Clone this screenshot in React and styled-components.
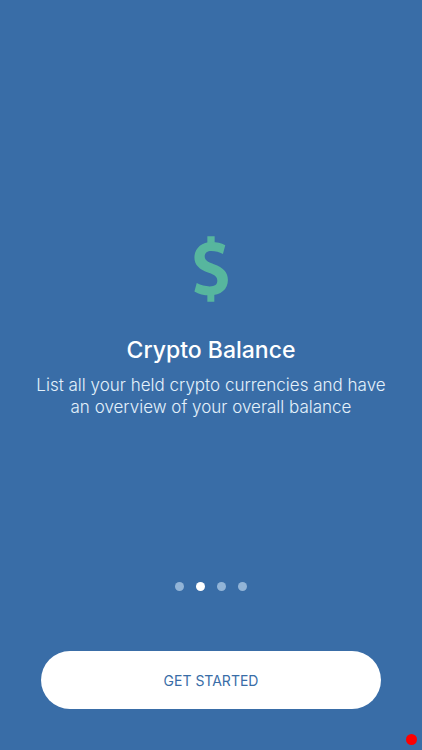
import React, { useState } from "react";
import styled, { createGlobalStyle } from "styled-components";

const GlobalStyle = createGlobalStyle`
  * {
    box-sizing: border-box;
  }
  body {
    margin: 0;
    background-color: #396da7;
    font-family: Inter, "Liberation Sans", sans-serif;
  }
`;

const Screen = styled.main`
  min-height: 100vh;
  width: 100%;
  background-color: #396da7;
  color: #fff;
  display: flex;
  flex-direction: column;
`;

const Slide = styled.section`
  flex: 1;
  display: flex;
  flex-direction: column;
  justify-content: center;
  align-items: center;
  padding: 72px 24px 0;
  text-align: center;
`;

const Icon = styled.svg`
  width: 34px;
  height: 66px;
  fill: #57b69e;
`;

const Title = styled.h1`
  margin: 32px 0 0;
  font-size: 23px;
  line-height: 32px;
  font-weight: 500;
`;

const Description = styled.p`
  max-width: 370px;
  margin: 8px 0 0;
  color: #e4f1fb;
  font-size: 17px;
  line-height: 22px;
  font-weight: 300;
`;

const Pagination = styled.nav`
  display: flex;
  justify-content: center;
  gap: 12px;
`;

const Dot = styled.button`
  width: 9px;
  height: 9px;
  padding: 0;
  border: none;
  border-radius: 50%;
  background-color: ${(props) => (props.$active ? "#fff" : "#92b4d7")};
  cursor: pointer;
`;

const Footer = styled.footer`
  padding: 60px 41px 41px;
`;

const StartButton = styled.button`
  display: block;
  width: 100%;
  height: 58px;
  border: none;
  border-radius: 29px;
  background-color: #fff;
  color: #396da7;
  font-family: inherit;
  font-size: 14px;
  font-weight: 400;
  cursor: pointer;
`;

const Indicator = styled.span`
  position: fixed;
  right: 5px;
  bottom: 5px;
  width: 11px;
  height: 11px;
  border-radius: 50%;
  background-color: #fe0000;
`;

const DollarIcon = () => (
  <Icon viewBox="39 33 102 199" aria-hidden="true">
    <path d="M79 34H101V60H79ZM79 204H100V231H79Z" />
    <path d="M133 61L126 87C115 81 104 78 91 78C79 78 71 84 71 94C71 105 79 111 99 118C127 128 141 142 141 166C141 194 120 212 86 212C68 212 53 208 40 200L47 175C60 182 73 185 86 185C102 185 109 179 109 168C109 157 103 151 83 144C54 134 40 120 40 98C40 70 62 51 92 51C107 51 121 54 133 61Z" />
  </Icon>
);

const App = () => {
  const [current, setCurrent] = useState(1);

  return (
    <>
      <GlobalStyle />
      <Screen>
        <Slide>
          <DollarIcon />
          <Title>Crypto Balance</Title>
          <Description>
            List all your held crypto currencies and have an overview of your
            overall balance
          </Description>
        </Slide>
        <Pagination aria-label="Slides">
          {[0, 1, 2, 3].map((index) => (
            <Dot
              key={index}
              type="button"
              aria-label={`Slide ${index + 1}`}
              $active={index === current}
              onClick={() => setCurrent(index)}
            />
          ))}
        </Pagination>
        <Footer>
          <StartButton type="button">GET STARTED</StartButton>
        </Footer>
        <Indicator />
      </Screen>
    </>
  );
};

export default App;
